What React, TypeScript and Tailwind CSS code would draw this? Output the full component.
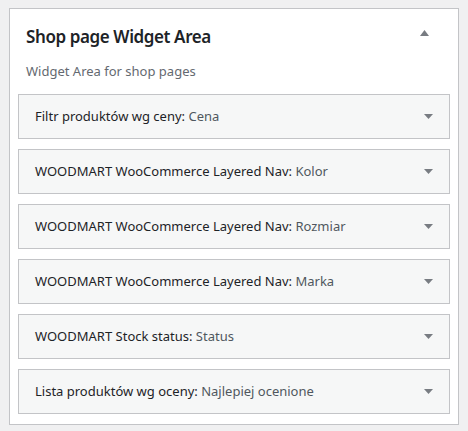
import React from 'react';

const widgets: { name: string; title: string }[] = [
    { name: 'Filtr produktów wg ceny', title: 'Cena' },
    { name: 'WOODMART WooCommerce Layered Nav', title: 'Kolor' },
    { name: 'WOODMART WooCommerce Layered Nav', title: 'Rozmiar' },
    { name: 'WOODMART WooCommerce Layered Nav', title: 'Marka' },
    { name: 'WOODMART Stock status', title: 'Status' },
    { name: 'Lista produktów wg oceny', title: 'Najlepiej ocenione' },
];

const Arrow: React.FC<{ up?: boolean }> = ({ up }) => (
    <svg width="9" height="6" viewBox="0 0 9 6" className="shrink-0">
        {up ? <path d="M4.5 0 L9 6 L0 6 Z" fill="#787c82" /> : <path d="M0 0 L9 0 L4.5 5 Z" fill="#787c82" />}
    </svg>
);

const App: React.FC = () => {
    return (
        <div className="w-[468px] h-[431px] bg-[#f0f0f1] pt-2 pl-[9px] font-['Noto_Sans',sans-serif]">
            <div className="w-[450px] bg-white border border-[#c3c4c7] pl-2 pr-2 pb-[10px]">
                <div className="flex items-start justify-between pl-2 pr-[21px] pt-[15px]">
                    <h2 className="text-[17px] leading-[26px] font-semibold tracking-[-0.4px] text-[#1d2327]">
                        Shop page Widget Area
                    </h2>
                    <div className="pt-[6px]">
                        <Arrow up />
                    </div>
                </div>
                <p className="pl-2 mt-[12px] text-[13px] leading-[18px] text-[#646970]">Widget Area for shop pages</p>
                <div className="mt-[14px] flex flex-col gap-[10px]">
                    {widgets.map((w, i) => (
                        <div
                            key={i}
                            className="h-[45px] bg-[#f6f7f7] border border-[#c3c4c7] flex items-center justify-between pl-4 pr-4"
                        >
                            <span className="text-[13px] text-[#1d2327]">
                                {w.name}: <span className="text-[#50575e]">{w.title}</span>
                            </span>
                            <Arrow />
                        </div>
                    ))}
                </div>
            </div>
        </div>
    );
};

export default App;
